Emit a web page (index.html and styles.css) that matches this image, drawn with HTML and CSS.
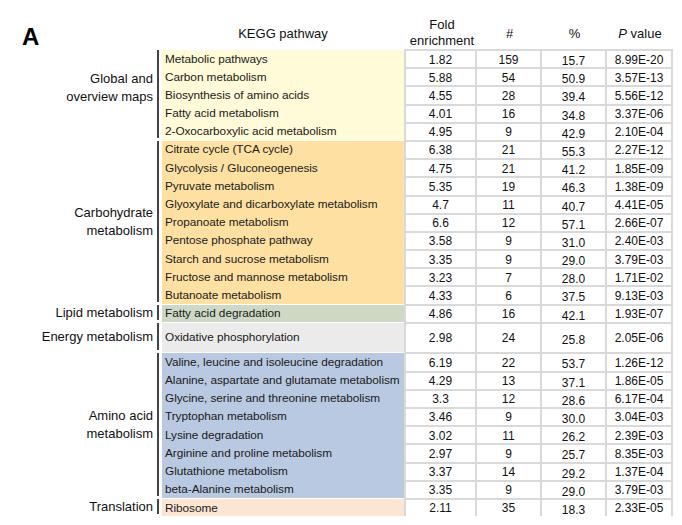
FILE: index.html
```html
<!DOCTYPE html>
<html>
<head>
<meta charset="utf-8">
<link rel="stylesheet" href="styles.css">
</head>
<body>
<div class="page">
  <div class="head">
    <div class="h-a">A</div>
    <div class="h-kegg">KEGG pathway</div>
    <div class="h-fold">Fold<br>enrichment</div>
    <div class="h-col">#</div>
    <div class="h-col">%</div>
    <div class="h-col"><i>P</i> value</div>
  </div>

  <div class="group g-global">
    <div class="glabel shift-up">Global and<br>overview maps</div>
    <div class="gbar"></div>
    <div class="grows">
      <div class="row"><div class="path">Metabolic pathways</div><div class="num n1">1.82</div><div class="num">159</div><div class="num pct">15.7</div><div class="num">8.99E-20</div></div>
      <div class="row"><div class="path">Carbon metabolism</div><div class="num n1">5.88</div><div class="num">54</div><div class="num pct">50.9</div><div class="num">3.57E-13</div></div>
      <div class="row"><div class="path">Biosynthesis of amino acids</div><div class="num n1">4.55</div><div class="num">28</div><div class="num pct">39.4</div><div class="num">5.56E-12</div></div>
      <div class="row"><div class="path">Fatty acid metabolism</div><div class="num n1">4.01</div><div class="num">16</div><div class="num pct">34.8</div><div class="num">3.37E-06</div></div>
      <div class="row"><div class="path">2-Oxocarboxylic acid metabolism</div><div class="num n1">4.95</div><div class="num">9</div><div class="num pct">42.9</div><div class="num">2.10E-04</div></div>
    </div>
  </div>

  <div class="group g-carbo">
    <div class="glabel">Carbohydrate<br>metabolism</div>
    <div class="gbar"></div>
    <div class="grows">
      <div class="row"><div class="path">Citrate cycle (TCA cycle)</div><div class="num n1">6.38</div><div class="num">21</div><div class="num pct">55.3</div><div class="num">2.27E-12</div></div>
      <div class="row"><div class="path">Glycolysis / Gluconeogenesis</div><div class="num n1">4.75</div><div class="num">21</div><div class="num pct">41.2</div><div class="num">1.85E-09</div></div>
      <div class="row"><div class="path">Pyruvate metabolism</div><div class="num n1">5.35</div><div class="num">19</div><div class="num pct">46.3</div><div class="num">1.38E-09</div></div>
      <div class="row"><div class="path">Glyoxylate and dicarboxylate metabolism</div><div class="num n1">4.7</div><div class="num">11</div><div class="num pct">40.7</div><div class="num">4.41E-05</div></div>
      <div class="row"><div class="path">Propanoate metabolism</div><div class="num n1">6.6</div><div class="num">12</div><div class="num pct">57.1</div><div class="num">2.66E-07</div></div>
      <div class="row"><div class="path">Pentose phosphate pathway</div><div class="num n1">3.58</div><div class="num">9</div><div class="num pct">31.0</div><div class="num">2.40E-03</div></div>
      <div class="row"><div class="path">Starch and sucrose metabolism</div><div class="num n1">3.35</div><div class="num">9</div><div class="num pct">29.0</div><div class="num">3.79E-03</div></div>
      <div class="row"><div class="path">Fructose and mannose metabolism</div><div class="num n1">3.23</div><div class="num">7</div><div class="num pct">28.0</div><div class="num">1.71E-02</div></div>
      <div class="row"><div class="path">Butanoate metabolism</div><div class="num n1">4.33</div><div class="num">6</div><div class="num pct">37.5</div><div class="num">9.13E-03</div></div>
    </div>
  </div>

  <div class="group g-lipid">
    <div class="glabel">Lipid metabolism</div>
    <div class="gbar"></div>
    <div class="grows">
      <div class="row"><div class="path">Fatty acid degradation</div><div class="num n1">4.86</div><div class="num">16</div><div class="num pct">42.1</div><div class="num">1.93E-07</div></div>
    </div>
  </div>

  <div class="group g-energy">
    <div class="glabel">Energy metabolism</div>
    <div class="gbar"></div>
    <div class="grows">
      <div class="row tall"><div class="path">Oxidative phosphorylation</div><div class="num n1">2.98</div><div class="num">24</div><div class="num pct">25.8</div><div class="num">2.05E-06</div></div>
    </div>
  </div>

  <div class="group g-amino">
    <div class="glabel">Amino acid<br>metabolism</div>
    <div class="gbar"></div>
    <div class="grows">
      <div class="row"><div class="path">Valine, leucine and isoleucine degradation</div><div class="num n1">6.19</div><div class="num">22</div><div class="num pct">53.7</div><div class="num">1.26E-12</div></div>
      <div class="row"><div class="path">Alanine, aspartate and glutamate metabolism</div><div class="num n1">4.29</div><div class="num">13</div><div class="num pct">37.1</div><div class="num">1.86E-05</div></div>
      <div class="row"><div class="path">Glycine, serine and threonine metabolism</div><div class="num n1">3.3</div><div class="num">12</div><div class="num pct">28.6</div><div class="num">6.17E-04</div></div>
      <div class="row"><div class="path">Tryptophan metabolism</div><div class="num n1">3.46</div><div class="num">9</div><div class="num pct">30.0</div><div class="num">3.04E-03</div></div>
      <div class="row"><div class="path">Lysine degradation</div><div class="num n1">3.02</div><div class="num">11</div><div class="num pct">26.2</div><div class="num">2.39E-03</div></div>
      <div class="row"><div class="path">Arginine and proline metabolism</div><div class="num n1">2.97</div><div class="num">9</div><div class="num pct">25.7</div><div class="num">8.35E-03</div></div>
      <div class="row"><div class="path">Glutathione metabolism</div><div class="num n1">3.37</div><div class="num">14</div><div class="num pct">29.2</div><div class="num">1.37E-04</div></div>
      <div class="row"><div class="path">beta-Alanine metabolism</div><div class="num n1">3.35</div><div class="num">9</div><div class="num pct">29.0</div><div class="num">3.79E-03</div></div>
    </div>
  </div>

  <div class="group g-trans">
    <div class="glabel">Translation</div>
    <div class="gbar"></div>
    <div class="grows">
      <div class="row last"><div class="path">Ribosome</div><div class="num n1">2.11</div><div class="num">35</div><div class="num pct">18.3</div><div class="num">2.33E-05</div></div>
    </div>
  </div>
</div>
</body>
</html>
```

FILE: styles.css
```css
* { box-sizing: border-box; }
html, body { margin: 0; padding: 0; background: #fff; }
body {
  font-family: "Liberation Sans", Arial, sans-serif;
  color: #111;
}
.page { width: 682px; }

.head {
  display: grid;
  grid-template-columns: 162px 242px 73px 65px 65px 66px;
  height: 49px;
  align-items: end;
  font-size: 13px;
  line-height: 16px;
}
.h-a {
  align-self: start;
  margin-top: 25px;
  padding-left: 22px;
  font-size: 24px;
  font-weight: bold;
  line-height: 24px;
  color: #000;
}
.h-kegg { text-align: center; padding-bottom: 7px; }
.h-fold { text-align: center; line-height: 16px; padding-bottom: 0; padding-left: 3px; }
.h-col { text-align: center; padding-bottom: 7px; }

.group { display: flex; }
.glabel {
  width: 153px;
  margin-right: 4px;
  display: flex;
  align-items: center;
  justify-content: flex-end;
  text-align: right;
  font-size: 13px;
  line-height: 18px;
  color: #111;
}
.glabel.shift-up { padding-bottom: 12px; }
.gbar {
  width: 2px;
  margin: 1px 3px 2px 0;
  background: #444;
}
.grows { width: 511px; }

.row {
  display: grid;
  grid-template-columns: 242px 73px 65px 65px 66px;
  height: 18.2px;
  font-size: 12px;
}
.row.tall { height: 30.6px; }

.path {
  display: flex;
  align-items: center;
  padding-left: 3px;
  white-space: nowrap;
  overflow: hidden;
  font-size: 11.8px;
  letter-spacing: -0.05px;
  color: #1a1a1a;
}
.grows .row:first-child .path { box-shadow: inset 0 1px 0 #fff; }

.num {
  display: flex;
  align-items: center;
  justify-content: center;
  border-top: 2px solid #d9d9d9;
  border-right: 2px solid #d9d9d9;
  background: #fff;
  color: #111;
}
.num.n1 { border-left: 2px solid #d9d9d9; }
.num.pct { padding-top: 3px; }
.row.last .num { border-bottom: 2px solid #d9d9d9; }

.g-global .path { background: #fffad7; }
.g-carbo .path { background: #fee1a2; }
.g-lipid .path { background: #cdd8c5; }
.g-energy .path { background: #ebebeb; }
.g-amino .path { background: #b9c9e1; }
.g-trans .path { background: #fce5d3; }
```
